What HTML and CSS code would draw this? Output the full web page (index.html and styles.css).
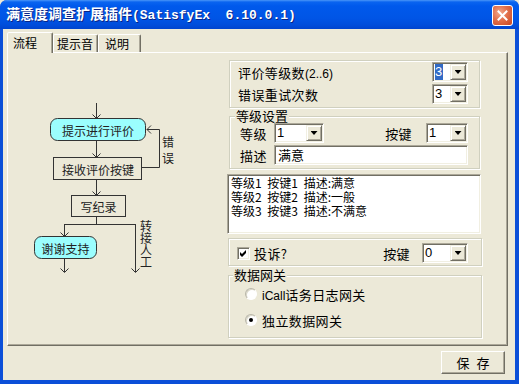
FILE: index.html
```html
<!DOCTYPE html>
<html lang="zh-CN">
<head>
    <meta charset="UTF-8">
    <meta name="viewport" content="width=device-width, initial-scale=1.0">
    <link rel="stylesheet" href="styles.css">
    <title>满意度调查扩展插件</title>
</head>
<body>
    <div class="window">
        <div class="titlebar">
            <span class="title">满意度调查扩展插件<span class="ver">(SatisfyEx  6.10.0.1)</span></span>
            <button class="close-btn" title="关闭">
                <svg width="11" height="11" viewBox="0 0 11 11"><path d="M1.5 1.5L9.5 9.5M9.5 1.5L1.5 9.5" stroke="#fff" stroke-width="2" stroke-linecap="square"/></svg>
            </button>
        </div>

        <div class="client">
            <div class="tabs">
                <div class="tab tab-flow active">流程</div>
                <div class="tab tab-sound">提示音</div>
                <div class="tab tab-help">说明</div>
            </div>

            <div class="panel">
                <!-- flow diagram, drawn in page coordinates -->
                <svg class="flow" width="219" height="292" viewBox="8 53 219 292">
                    <g class="lines">
                        <path d="M96.5 103V118M92.5 114.5L96.5 118.5L100.5 114.5"/>
                        <path d="M96.5 141V157M92.5 153.5L96.5 157.5L100.5 153.5"/>
                        <path d="M142 167.5H159.5V129.5H147M151 125.5L147 129.5L151 133.5"/>
                        <path d="M96.5 180V195M92.5 191.5L96.5 195.5L100.5 191.5"/>
                        <path d="M96.5 217V224.5M64 224.5H136"/>
                        <path d="M64.5 224V236M60.5 232.5L64.5 236.5L68.5 232.5"/>
                        <path d="M64.5 259V272M60.5 268.5L64.5 272.5L68.5 268.5"/>
                        <path d="M135.5 224V272M131.5 268.5L135.5 272.5L139.5 268.5"/>
                    </g>
                    <rect class="node start" x="50.5" y="118.5" width="95" height="22" rx="7"/>
                    <rect class="node" x="53.5" y="157.5" width="88" height="22"/>
                    <rect class="node" x="71.5" y="195.5" width="54" height="21"/>
                    <rect class="node start" x="34.5" y="236.5" width="62" height="22" rx="7"/>
                    <g class="labels">
                        <text x="98" y="130">提示进行评价</text>
                        <text x="98" y="169">接收评价按键</text>
                        <text x="98.5" y="206.5">写纪录</text>
                        <text x="65.5" y="248">谢谢支持</text>
                        <text class="vert wide" x="168" y="136">错误</text>
                        <text class="vert" x="146" y="220">转接人工</text>
                    </g>
                </svg>

                <div class="settings">
                    <div class="group g-count">
                        <div class="row">
                            <span class="label">评价等级数<small>(2..6)</small></span>
                            <div class="combo w36"><span class="val"><span class="sel">3</span></span><span class="drop"></span></div>
                        </div>
                        <div class="row">
                            <span class="label">错误重试次数</span>
                            <div class="combo w36"><span class="val">3</span><span class="drop"></span></div>
                        </div>
                    </div>

                    <div class="group g-level">
                        <span class="caption">等级设置</span>
                        <div class="row">
                            <span class="label short">等级</span>
                            <div class="combo w50"><span class="val">1</span><span class="drop"></span></div>
                            <span class="label key">按键</span>
                            <div class="combo w42"><span class="val">1</span><span class="drop"></span></div>
                        </div>
                        <div class="row">
                            <span class="label short">描述</span>
                            <div class="textbox">满意</div>
                        </div>
                    </div>

                    <div class="listbox">
                        <div class="item">等级1 按键1 描述:满意</div>
                        <div class="item">等级2 按键2 描述:一般</div>
                        <div class="item">等级3 按键3 描述:不满意</div>
                    </div>

                    <div class="group g-complain">
                        <div class="row">
                            <span class="checkbox"><svg width="7" height="7" viewBox="0 0 7 7"><path d="M0 2L2 4L6 0V3L2 7L0 5Z" fill="#000"/></svg></span>
                            <span class="label">投诉?</span>
                            <span class="label key">按键</span>
                            <div class="combo w46"><span class="val">0</span><span class="drop"></span></div>
                        </div>
                    </div>

                    <div class="group g-gateway">
                        <span class="caption">数据网关</span>
                        <div class="row">
                            <span class="radio"></span>
                            <span class="label"><span class="latin">iCall</span>话务日志网关</span>
                        </div>
                        <div class="row">
                            <span class="radio checked"></span>
                            <span class="label">独立数据网关</span>
                        </div>
                    </div>
                </div>
            </div>

            <div class="footer">
                <button class="btn">保 存</button>
            </div>
        </div>
    </div>
</body>
</html>
```

FILE: styles.css
```css
* {
    box-sizing: border-box;
}

body {
    margin: 0;
    background: #ECE9D8;
    font-family: "Noto Sans CJK SC", "Liberation Sans", sans-serif;
    font-size: 13px;
    color: #000;
}

.window {
    width: 519px;
    height: 384px;
    display: flex;
    flex-direction: column;
    background: #0B4FD8;
    border-radius: 7px 7px 0 0;
    overflow: hidden;
}

/* title bar */
.titlebar {
    flex: none;
    height: 29px;
    display: flex;
    align-items: center;
    padding: 0 6px;
    background: linear-gradient(#4A96F8 0, #0A64F0 2px, #0059EC 6px, #0055E6 18px, #004DDB 25px, #0044CE 29px);
}

.title {
    flex: 1;
    color: #fff;
    font-weight: bold;
    font-size: 14px;
    line-height: 16px;
    white-space: pre;
    text-shadow: 1px 1px #0A2585;
}

.title .ver {
    font-family: "Liberation Mono", monospace;
    font-size: 13px;
}

.close-btn {
    width: 21px;
    height: 21px;
    margin-top: 1px;
    padding: 0;
    display: flex;
    align-items: center;
    justify-content: center;
    border: 1px solid #fff;
    border-radius: 3px;
    background: radial-gradient(circle at 35% 35%, #F2A98E 0, #E2704C 45%, #C8451F 100%);
}

/* client area */
.client {
    flex: 1;
    display: flex;
    flex-direction: column;
    margin: 0 4px 4px 3px;
    padding: 3px 0 0 4px;
    background: #ECE9D8;
}

.tabs {
    height: 20px;
    display: flex;
    align-items: flex-start;
    position: relative;
    z-index: 1;
}

.tab {
    height: 18px;
    margin-top: 2px;
    padding: 0 0 0 3px;
    font-size: 12px;
    line-height: 17px;
    border: 1px solid;
    border-bottom: none;
    border-color: #fff #716F64 transparent #fff;
    border-radius: 2px 2px 0 0;
    box-shadow: inset -1px 0 #ACA899;
    background: #ECE9D8;
}

.tab.active {
    height: 21px;
    margin-top: 0;
    padding-top: 1px;
}

.tab-flow {
    width: 46px;
    padding-left: 5px;
}

.tab-sound {
    width: 45px;
}

.tab-help {
    width: 43px;
    padding-left: 6px;
}

.panel {
    width: 501px;
    height: 294px;
    display: flex;
    border: 1px solid;
    border-color: #fff #716F64 #716F64 #fff;
    box-shadow: inset -1px -1px #ACA899;
}

/* flow chart */
.flow {
    flex: none;
    display: block;
}

.flow .lines path {
    fill: none;
    stroke: #333;
    stroke-width: 1;
}

.flow .node {
    fill: none;
    stroke: #333;
    stroke-width: 1;
    shape-rendering: crispEdges;
}

.flow .node.start {
    fill: #9BFEFE;
    shape-rendering: auto;
}

.flow text {
    font-family: "Noto Sans CJK SC", sans-serif;
    font-size: 12px;
    fill: #222;
    text-anchor: middle;
    dominant-baseline: central;
}

.flow text.vert {
    writing-mode: vertical-rl;
    text-anchor: start;
}

.flow text.wide {
    letter-spacing: 4px;
}

/* settings column */
.settings {
    width: 255px;
    padding-top: 7px;
    display: flex;
    flex-direction: column;
}

.group {
    position: relative;
    border: 1px solid #D0D0BF;
    box-shadow: inset 1px 1px #fff, 1px 1px #fff;
}

.caption {
    position: absolute;
    top: -8px;
    padding: 0 1px;
    font-size: 13px;
    line-height: 14px;
    background: #ECE9D8;
}

.row {
    height: 20px;
    display: flex;
    align-items: center;
}

.label {
    white-space: nowrap;
    letter-spacing: 0.4px;
}

.label small {
    font-family: "Liberation Sans", sans-serif;
    font-size: 12px;
    letter-spacing: 0;
}

.label .latin {
    font-family: "Liberation Sans", sans-serif;
    font-size: 12px;
    letter-spacing: 0;
}

.label.short {
    width: 34px;
}

.g-count {
    margin-left: 2px;
    width: 251px;
    padding: 1px 11px 3px 8px;
    display: flex;
    flex-direction: column;
    gap: 2px;
}

.g-count .row {
    justify-content: space-between;
}

.g-level {
    margin: 8px 0 0 2px;
    width: 251px;
    padding: 6px 11px 3px 10px;
    display: flex;
    flex-direction: column;
    gap: 2px;
}

.g-level .caption {
    left: 5px;
}

.g-level .key {
    margin-left: auto;
    margin-right: 14px;
}

.g-complain {
    margin: 4px 0 0 1px;
    width: 254px;
    padding: 4px 13px 2px 8px;
}

.g-complain .key {
    margin-left: auto;
    margin-right: 12px;
}

.g-gateway {
    margin: 9px 0 0 1px;
    width: 254px;
    padding: 8px 10px 7px 16px;
    display: flex;
    flex-direction: column;
    gap: 6px;
}

.g-gateway .caption {
    left: 4px;
}

/* controls */
.combo {
    height: 20px;
    display: flex;
    padding: 1px;
    background: #fff;
    border: 1px solid;
    border-color: #ACA899 #fff #fff #ACA899;
    box-shadow: inset 1px 1px #716F64, inset -1px -1px #F1EFE2;
}

.w36 { width: 36px; }
.w42 { width: 42px; }
.w46 { width: 46px; }
.w50 { width: 50px; }

.val {
    flex: 1;
    padding-left: 1px;
    font-family: "Liberation Sans", sans-serif;
    font-size: 13px;
    line-height: 16px;
}

.sel {
    display: inline-block;
    width: 8px;
    background: #316AC5;
    color: #fff;
}

.drop {
    width: 16px;
    height: 16px;
    display: flex;
    align-items: center;
    justify-content: center;
    background: #ECE9D8;
    border: 1px solid;
    border-color: #F1EFE2 #716F64 #716F64 #F1EFE2;
    box-shadow: inset 1px 1px #fff, inset -1px -1px #ACA899;
}

.drop::after {
    content: "";
    width: 7px;
    height: 4px;
    background: #000;
    clip-path: polygon(0 0, 100% 0, 50% 100%);
}

.textbox {
    width: 194px;
    height: 20px;
    padding: 1px 0 0 3px;
    line-height: 16px;
    background: #fff;
    border: 1px solid;
    border-color: #ACA899 #fff #fff #ACA899;
    box-shadow: inset 1px 1px #716F64, inset -1px -1px #F1EFE2;
}

.listbox {
    margin-top: 5px;
    width: 254px;
    height: 60px;
    padding: 1px 3px;
    font-size: 12px;
    line-height: 14px;
    word-spacing: 3px;
    background: #fff;
    border: 1px solid;
    border-color: #ACA899 #fff #fff #ACA899;
    box-shadow: inset 1px 1px #716F64, inset -1px -1px #F1EFE2;
}

.listbox .item {
    white-space: pre;
}

.checkbox {
    width: 13px;
    height: 13px;
    margin-right: 4px;
    display: flex;
    align-items: center;
    justify-content: center;
    background: #fff;
    border: 1px solid;
    border-color: #ACA899 #fff #fff #ACA899;
    box-shadow: inset 1px 1px #716F64, inset -1px -1px #F1EFE2;
}

.radio {
    width: 12px;
    height: 12px;
    margin-right: 5px;
    display: flex;
    align-items: center;
    justify-content: center;
    border-radius: 50%;
    background: #fff;
    border: 1px solid;
    border-color: #B8B6A8 #fff #fff #B8B6A8;
    box-shadow: inset 1px 1px #DAD7C8;
}

.radio.checked::after {
    content: "";
    width: 4px;
    height: 4px;
    border-radius: 50%;
    background: #000;
}

/* footer */
.footer {
    display: flex;
    justify-content: flex-end;
    padding: 5px 10px 0 0;
}

.btn {
    width: 64px;
    height: 23px;
    padding: 0;
    font-family: "Noto Sans CJK SC", sans-serif;
    font-size: 13px;
    word-spacing: 4px;
    color: #000;
    background: #ECE9D8;
    border: 1px solid;
    border-color: #fff #716F64 #716F64 #fff;
    box-shadow: inset -1px -1px #ACA899;
}
```
